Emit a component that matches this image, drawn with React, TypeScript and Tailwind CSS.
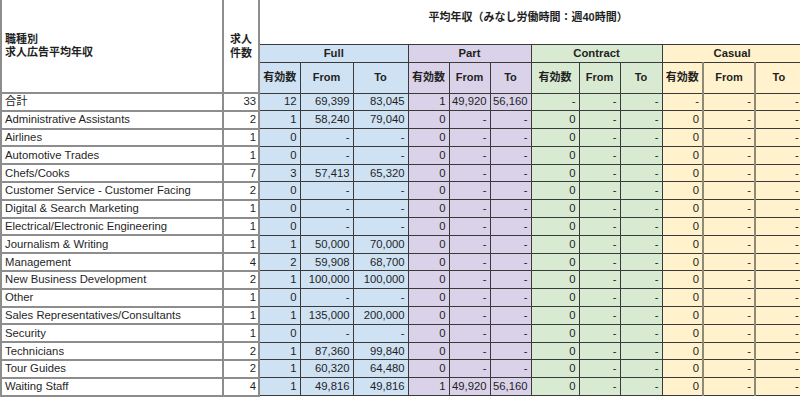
const groups = [
  { name: "Full", bg: "bg-[#cfe2f3]" },
  { name: "Part", bg: "bg-[#d9d2e9]" },
  { name: "Contract", bg: "bg-[#d9ead3]" },
  { name: "Casual", bg: "bg-[#fff2cc]" },
];

const colWidths = [222, 36, 41, 53, 55, 41, 41, 41, 48, 41, 42, 41, 52, 47];

const none = ["0", "-", "-"];
const dash = ["-", "-", "-"];

const rows: [string, string, ...string[]][] = [
  ["合計", "33", "12", "69,399", "83,045", "1", "49,920", "56,160", ...dash, ...dash],
  ["Administrative Assistants", "2", "1", "58,240", "79,040", ...none, ...none, ...none],
  ["Airlines", "1", ...none, ...none, ...none, ...none],
  ["Automotive Trades", "1", ...none, ...none, ...none, ...none],
  ["Chefs/Cooks", "7", "3", "57,413", "65,320", ...none, ...none, ...none],
  ["Customer Service - Customer Facing", "2", ...none, ...none, ...none, ...none],
  ["Digital & Search Marketing", "1", ...none, ...none, ...none, ...none],
  ["Electrical/Electronic Engineering", "1", ...none, ...none, ...none, ...none],
  ["Journalism & Writing", "1", "1", "50,000", "70,000", ...none, ...none, ...none],
  ["Management", "4", "2", "59,908", "68,700", ...none, ...none, ...none],
  ["New Business Development", "2", "1", "100,000", "100,000", ...none, ...none, ...none],
  ["Other", "1", ...none, ...none, ...none, ...none],
  ["Sales Representatives/Consultants", "1", "1", "135,000", "200,000", ...none, ...none, ...none],
  ["Security", "1", ...none, ...none, ...none, ...none],
  ["Technicians", "2", "1", "87,360", "99,840", ...none, ...none, ...none],
  ["Tour Guides", "2", "1", "60,320", "64,480", ...none, ...none, ...none],
  ["Waiting Staff", "4", "1", "49,816", "49,816", "1", "49,920", "56,160", ...none, ...none],
];

const leftCell = "border-2 border-[#8d8d8d] bg-white";
const valueCell = "border border-[#3a3a3a]";

function groupCell(g: number, i: number) {
  const casualInner = g === 3 && i > 0 ? " border-l-2 border-l-[#8f8a78]" : "";
  return `${valueCell} ${groups[g].bg}${casualInner}`;
}

export default function App() {
  return (
    <div
      className="h-[397px] w-[800px] overflow-hidden bg-white text-[#1f1f1f]"
      style={{ fontFamily: '"Liberation Sans", Arial, "Noto Sans CJK JP", sans-serif' }}
    >
      <table className="table-fixed border-collapse text-[11.3px] leading-[13px]" style={{ width: 801 }}>
        <colgroup>
          {colWidths.map((w, i) => (
            <col key={i} style={{ width: w }} />
          ))}
        </colgroup>
        <thead>
          <tr className="h-[44px]">
            <th rowSpan={3} className={`${leftCell} border-t-0 pl-[3px] text-left align-middle text-[11px] font-bold leading-[13px]`}>
              職種別
              <br />
              求人広告平均年収
            </th>
            <th rowSpan={3} className={`${leftCell} border-t-0 text-center align-middle text-[11px] font-bold leading-[14px]`}>
              求人
              <br />
              件数
            </th>
            <th colSpan={12} className="border-b border-[#3a3a3a] bg-white pr-[6px] pt-[11px] text-center align-top text-[11px] font-bold">
              平均年収（みなし労働時間：週40時間）
            </th>
          </tr>
          <tr className="h-[18px]">
            {groups.map((g) => (
              <th key={g.name} colSpan={3} className={`${valueCell} ${g.bg} text-center font-bold`}>
                {g.name}
              </th>
            ))}
          </tr>
          <tr className="h-[31px]">
            {groups.map((_, gi) =>
              ["有効数", "From", "To"].map((label, i) => (
                <th key={`${gi}-${i}`} className={`${groupCell(gi, i)} text-center text-[11px] font-bold`}>
                  {label}
                </th>
              ))
            )}
          </tr>
        </thead>
        <tbody>
          {rows.map((r) => (
            <tr key={r[0]} className="h-[17.8px]">
              <td className={`${leftCell} whitespace-nowrap pl-[3px] text-left`}>{r[0]}</td>
              <td className={`${leftCell} pr-[2px] text-right`}>{r[1]}</td>
              {r.slice(2).map((v, i) => (
                <td key={i} className={`${groupCell(Math.floor(i / 3), i % 3)} whitespace-nowrap pr-[3px] text-right`}>
                  {v}
                </td>
              ))}
            </tr>
          ))}
        </tbody>
      </table>
    </div>
  );
}
